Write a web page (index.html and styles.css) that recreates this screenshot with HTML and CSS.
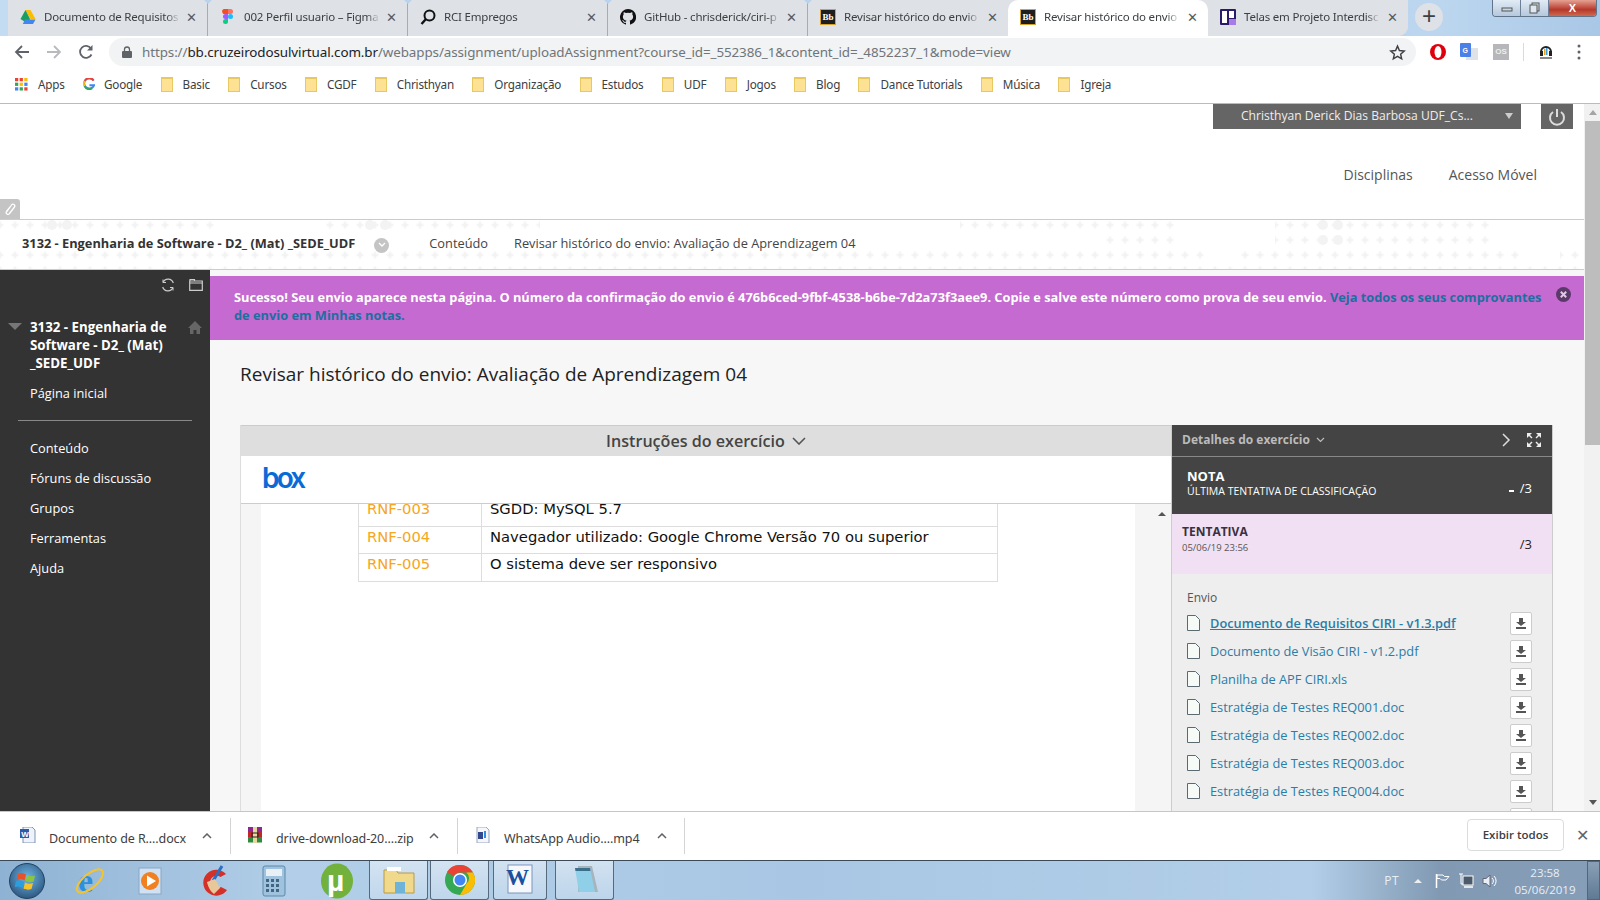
FILE: index.html
```html
<!DOCTYPE html>
<html lang="pt">
<head>
<meta charset="utf-8">
<title>Revisar histórico do envio</title>
<link rel="stylesheet" href="styles.css">
</head>
<body>
<div class="browser">
  <div class="tabstrip">
    <div class="tabs">
      <div class="tab"><svg class="fav" viewBox="0 0 16 16"><path fill="#fbbc04" d="M5.500 1h5l5 9h-5z"/><path fill="#1a9f5f" d="M5.500 1 10 10l-2.500 4.500L0.500 10z"/><path fill="#4285f4" d="M5 10.500h10.500L13 15H2.800z"/></svg><span class="tab-title">Documento de Requisitos</span><span class="tab-x">✕</span></div>
      <div class="tab"><svg class="fav" viewBox="0 0 16 16"><path fill="#f24e1e" d="M4 0h4v5H5.500a2.500 2.500 0 0 1-1.500-5z"/><path fill="#ff7262" d="M8 0h2.500a2.500 2.500 0 0 1 0 5H8z"/><path fill="#a259ff" d="M5.500 5H8v5H5.500a2.500 2.500 0 0 1 0-5z"/><circle fill="#1abcfe" cx="10.500" cy="7.500" r="2.500"/><path fill="#0acf83" d="M5.500 10H8v2.500a2.500 2.500 0 1 1-2.500-2.500z"/></svg><span class="tab-title">002 Perfil usuario – Figma</span><span class="tab-x">✕</span></div>
      <div class="tab"><svg class="fav" viewBox="0 0 16 16"><circle cx="9.500" cy="6.500" r="5" fill="none" stroke="#111" stroke-width="2"/><path d="M6 10 1.500 15" stroke="#111" stroke-width="2.400"/></svg><span class="tab-title">RCI Empregos</span><span class="tab-x">✕</span></div>
      <div class="tab"><svg class="fav" viewBox="0 0 16 16"><path fill="#111" d="M8 0a8 8 0 0 0-2.500 15.600c.4.100.500-.200.500-.400v-1.400c-2.200.500-2.700-1-2.700-1-.4-.900-.900-1.200-.900-1.200-.700-.500.100-.500.100-.500.800.100 1.200.800 1.200.800.700 1.200 1.900.900 2.300.700.100-.500.300-.900.500-1.100-1.800-.200-3.600-.900-3.600-4 0-.900.300-1.600.800-2.100-.100-.200-.400-1 .100-2.100 0 0 .700-.200 2.200.800a7.500 7.500 0 0 1 4 0c1.500-1 2.200-.800 2.200-.800.400 1.100.200 1.900.100 2.100.500.600.800 1.300.800 2.100 0 3.100-1.900 3.800-3.600 4 .300.200.500.700.500 1.500v2.200c0 .200.100.500.600.400A8 8 0 0 0 8 0z"/></svg><span class="tab-title">GitHub - chrisderick/ciri-p</span><span class="tab-x">✕</span></div>
      <div class="tab"><span class="bb">Bb</span><span class="tab-title">Revisar histórico do envio</span><span class="tab-x">✕</span></div>
      <div class="tab tab-active"><span class="bb">Bb</span><span class="tab-title">Revisar histórico do envio</span><span class="tab-x">✕</span></div>
      <div class="tab tab-last"><svg class="fav" viewBox="0 0 16 16"><rect width="16" height="16" rx="1" fill="#2b1a6c"/><rect x="2" y="2" width="5" height="12" fill="#fff"/><rect x="9" y="2" width="5" height="7" fill="#fff"/><rect x="9" y="10" width="7" height="6" fill="#a87be8"/></svg><span class="tab-title">Telas em Projeto Interdisc</span><span class="tab-x">✕</span></div>
    </div>
    <div class="newtab">+</div>
    <div class="winctl">
      <span class="win-btn"><svg width="12" height="8" viewBox="0 0 12 8"><rect x="1" y="4" width="10" height="3" fill="none" stroke="#555"/></svg></span>
      <span class="win-btn"><svg width="12" height="12" viewBox="0 0 12 12"><rect x="3" y="1" width="7" height="8" fill="none" stroke="#555"/><rect x="1" y="3" width="7" height="8" fill="#dfe8f2" stroke="#555"/></svg></span>
      <span class="win-btn win-close">X</span>
    </div>
  </div>

  <div class="toolbar">
    <svg class="tool" viewBox="0 0 16 16"><path d="M15 8H2M8 2 2 8l6 6" fill="none" stroke="#5f6368" stroke-width="1.800"/></svg>
    <svg class="tool" viewBox="0 0 16 16"><path d="M1 8h13M8 2l6 6-6 6" fill="none" stroke="#b8babd" stroke-width="1.800"/></svg>
    <svg class="tool" viewBox="0 0 16 16"><path d="M13.500 10.500A6 6 0 1 1 13 4.500" fill="none" stroke="#5f6368" stroke-width="1.800"/><path d="M14.500 1v5.500H9z" fill="#5f6368"/></svg>
    <div class="omnibox">
      <svg class="lock" viewBox="0 0 10 12"><path d="M2.500 5V3.500a2.500 2.500 0 0 1 5 0V5" fill="none" stroke="#5f6368" stroke-width="1.300"/><rect y="5" width="10" height="7" rx="1" fill="#5f6368"/></svg>
      <span class="url">https://<span class="url-host">bb.cruzeirodosulvirtual.com.br</span>/webapps/assignment/uploadAssignment?course_id=_552386_1&amp;content_id=_4852237_1&amp;mode=view</span>
      <svg class="star" viewBox="0 0 24 24"><path d="M12 3l2.700 6.200 6.800.6-5.100 4.500 1.500 6.600L12 17.400l-5.900 3.500 1.500-6.600L2.500 9.800l6.800-.6z" fill="none" stroke="#3c4043" stroke-width="2"/></svg>
    </div>
    <div class="extensions">
      <svg class="ext" viewBox="0 0 18 18"><circle cx="9" cy="9" r="8" fill="#e0000d"/><ellipse cx="9" cy="9" rx="3.500" ry="6" fill="#fff"/></svg>
      <svg class="ext" viewBox="0 0 18 18"><rect x="6" y="5" width="12" height="12" fill="#dfe3e8"/><rect width="11" height="14" rx="1" fill="#4a80e8"/><text x="2.500" y="10" class="ext-g">G</text></svg>
      <span class="ext-os">OS</span>
      <span class="ext-sep"></span>
      <svg class="ext" viewBox="0 0 18 18"><path d="M4 9a5 5 0 0 1 10 0" fill="none" stroke="#222" stroke-width="2"/><rect x="3" y="8" width="3" height="5" fill="#222"/><rect x="12" y="8" width="3" height="5" fill="#222"/><rect x="7" y="6" width="1.500" height="6" fill="#e8a020"/><rect x="9" y="5" width="1.500" height="7" fill="#3aa0e0"/><rect x="3" y="14" width="12" height="2" fill="#888"/></svg>
      <svg class="ext ext-dots" viewBox="0 0 4 16"><circle cx="2" cy="2" r="1.500" fill="#5f6368"/><circle cx="2" cy="8" r="1.500" fill="#5f6368"/><circle cx="2" cy="14" r="1.500" fill="#5f6368"/></svg>
    </div>
  </div>

  <div class="bookmarks">
    <span class="bm bm-apps"><svg class="bm-ico" viewBox="0 0 14 14"><g fill="#ea4335"><rect width="3.500" height="3.500"/><rect x="5" width="3.500" height="3.500"/></g><rect x="10" width="3.500" height="3.500" fill="#fbbc04"/><rect y="5" width="3.500" height="3.500" fill="#34a853"/><rect x="5" y="5" width="3.500" height="3.500" fill="#fbbc04"/><rect x="10" y="5" width="3.500" height="3.500" fill="#4285f4"/><rect y="10" width="3.500" height="3.500" fill="#4285f4"/><rect x="5" y="10" width="3.500" height="3.500" fill="#34a853"/><rect x="10" y="10" width="3.500" height="3.500" fill="#ea4335"/></svg>Apps</span>
    <span class="bm"><svg class="bm-ico bm-g" viewBox="0 0 14 14"><path d="M12.500 3A6 6 0 1 0 13 8.500H7.500" fill="none" stroke="#4285f4" stroke-width="2.200"/><path d="M12.300 3A6 6 0 0 0 2 3.500" fill="none" stroke="#ea4335" stroke-width="2.200"/><path d="M1.800 3.500a6 6 0 0 0 0 6" fill="none" stroke="#fbbc04" stroke-width="2.200"/><path d="M1.800 9.500a6 6 0 0 0 9 2.500" fill="none" stroke="#34a853" stroke-width="2.200"/></svg>Google</span>
    <span class="bm"><i class="folder"></i>Basic</span>
    <span class="bm"><i class="folder"></i>Cursos</span>
    <span class="bm"><i class="folder"></i>CGDF</span>
    <span class="bm"><i class="folder"></i>Christhyan</span>
    <span class="bm"><i class="folder"></i>Organização</span>
    <span class="bm"><i class="folder"></i>Estudos</span>
    <span class="bm"><i class="folder"></i>UDF</span>
    <span class="bm"><i class="folder"></i>Jogos</span>
    <span class="bm"><i class="folder"></i>Blog</span>
    <span class="bm"><i class="folder"></i>Dance Tutorials</span>
    <span class="bm"><i class="folder"></i>Música</span>
    <span class="bm"><i class="folder"></i>Igreja</span>
  </div>

  <div class="page">
    <div class="page-main">
      <header class="site-head">
        <div class="user-row">
          <div class="user-btn"><span>Christhyan Derick Dias Barbosa UDF_Cs...</span><i class="user-caret"></i></div>
          <div class="power"><svg width="18" height="18" viewBox="0 0 18 18"><path d="M5 4a7 7 0 1 0 8 0" fill="none" stroke="#ddd" stroke-width="2"/><path d="M9 1v8" stroke="#ddd" stroke-width="2"/></svg></div>
        </div>
        <nav class="site-nav"><a>Disciplinas</a><a>Acesso Móvel</a></nav>
        <div class="clip-tab"><svg width="12" height="14" viewBox="0 0 12 14"><path d="M3 9.500 7.500 3a1.800 1.800 0 0 1 3 2L5.500 11.500a1.800 1.800 0 0 1-3-2L6 5" fill="none" stroke="#fff" stroke-width="1.300"/></svg></div>
      </header>

      <div class="crumbs">
        <svg class="crumbs-bg" width="1584" height="49">
          <defs>
            <pattern id="plus" width="15" height="15" patternUnits="userSpaceOnUse" patternTransform="translate(7.500 -2.500)"><path d="M4 7.500h7M7.500 4v7" stroke="#f1f1f1" stroke-width="2"/></pattern>
          </defs>
          <rect y="0" width="220" height="13" fill="url(#plus)"/><rect x="320" y="0" width="220" height="13" fill="url(#plus)"/><rect x="960" y="0" width="215" height="13" fill="url(#plus)"/><rect x="1275" y="0" width="215" height="13" fill="url(#plus)"/>
          <rect x="1105" y="13" width="70" height="15" fill="url(#plus)"/><rect x="1275" y="13" width="215" height="15" fill="url(#plus)"/>
          <rect y="28" width="1205" height="15" fill="url(#plus)"/><rect x="1240" y="28" width="285" height="15" fill="url(#plus)"/><rect x="1560" y="28" width="24" height="15" fill="url(#plus)"/>
          <rect y="43" width="1584" height="6" fill="url(#plus)"/>
          <g fill="#f3f3f3"><circle cx="52" cy="5" r="5"/><circle cx="67" cy="5" r="5"/><circle cx="370" cy="5" r="5"/><circle cx="385" cy="5" r="5"/><circle cx="1323" cy="5" r="5"/><circle cx="1338" cy="5" r="5"/><circle cx="1323" cy="20" r="5"/><circle cx="1338" cy="20" r="5"/></g>
        </svg>
        <strong class="crumb-course">3132 - Engenharia de Software - D2_ (Mat) _SEDE_UDF</strong>
        <i class="crumb-toggle"><svg width="8" height="6" viewBox="0 0 8 6"><path d="M1 1l3 3 3-3" fill="none" stroke="#fff" stroke-width="1.300"/></svg></i>
        <span class="crumb">Conteúdo</span>
        <span class="crumb">Revisar histórico do envio: Avaliação de Aprendizagem 04</span>
      </div>

      <div class="body-row">
        <aside class="sidebar">
          <div class="side-tools">
            <svg width="14" height="14" viewBox="0 0 14 14"><path d="M12.300 5A5.500 5.500 0 0 0 2 4.500M1.700 9a5.500 5.500 0 0 0 10.300.500" fill="none" stroke="#ccc" stroke-width="1.200"/><path d="M2 1.500v3h3M12 12.500v-3H9" fill="none" stroke="#ccc"/></svg>
            <svg width="14" height="13" viewBox="0 0 14 13"><path d="M1 3V1.500h4.500V3M.7 3h12.600v9.300H.7zM.7 5h12.600" fill="none" stroke="#ccc" stroke-width="1.200"/></svg>
          </div>
          <div class="side-course">
            <i class="side-tri"></i>
            <strong class="side-title">3132 - Engenharia de Software - D2_ (Mat) _SEDE_UDF</strong>
            <svg class="side-home" width="14" height="13" viewBox="0 0 14 13"><path d="M7 0 0 7h2v6h3.500V9h3v4H12V7h2z" fill="#666"/></svg>
          </div>
          <a class="side-link side-home-link">Página inicial</a>
          <hr class="side-rule">
          <a class="side-link">Conteúdo</a>
          <a class="side-link">Fóruns de discussão</a>
          <a class="side-link">Grupos</a>
          <a class="side-link">Ferramentas</a>
          <a class="side-link">Ajuda</a>
        </aside>

        <main class="content">
          <div class="banner">
            <p class="banner-text">Sucesso! Seu envio aparece nesta página. O número da confirmação do envio é 476b6ced-9fbf-4538-b6be-7d2a73f3aee9. Copie e salve este número como prova de seu envio. <a class="banner-link">Veja todos os seus comprovantes de envio em Minhas notas.</a></p>
            <svg class="banner-x" width="15" height="15" viewBox="0 0 15 15"><circle cx="7.500" cy="7.500" r="7.500" fill="#5b3a6b"/><path d="M4.800 4.800l5.400 5.400M10.200 4.800l-5.400 5.400" stroke="#e0c8e6" stroke-width="2"/></svg>
          </div>
          <h1 class="page-title">Revisar histórico do envio: Avaliação de Aprendizagem 04</h1>
          <div class="panel">
            <section class="instr">
              <div class="instr-head">Instruções do exercício <svg width="14" height="8" viewBox="0 0 14 8"><path d="M1 1l6 6 6-6" fill="none" stroke="#555" stroke-width="1.600"/></svg></div>
              <div class="box-bar"><span class="box-logo">box</span></div>
              <div class="viewer">
                <div class="doc">
                  <table class="req">
                    <tr><td class="req-id">RNF-003</td><td>SGDD: MySQL 5.7</td></tr>
                    <tr><td class="req-id">RNF-004</td><td>Navegador utilizado: Google Chrome Versão 70 ou superior</td></tr>
                    <tr><td class="req-id">RNF-005</td><td>O sistema deve ser responsivo</td></tr>
                  </table>
                </div>
                <div class="viewer-scroll"><i class="arr-up"></i></div>
              </div>
            </section>
            <aside class="details">
              <div class="det-head"><span class="det-title">Detalhes do exercício</span><svg width="9" height="6" viewBox="0 0 9 6"><path d="M1 1l3.500 3.500L8 1" fill="none" stroke="#bbb" stroke-width="1.200"/></svg>
                <svg class="det-next" width="9" height="14" viewBox="0 0 9 14"><path d="M1 1l6 6-6 6" fill="none" stroke="#ddd" stroke-width="1.500"/></svg>
                <svg class="det-exp" width="16" height="16" viewBox="0 0 16 16"><path d="M1 6V1h5L4 3l2.500 2.500-1 1L3 4zM15 6V1h-5l2 2-2.500 2.500 1 1L13 4zM1 10v5h5l-2-2 2.500-2.500-1-1L3 12zM15 10v5h-5l2-2-2.500-2.500 1-1L13 12z" fill="#eee"/></svg>
              </div>
              <div class="det-grade">
                <div><strong class="grade-label">NOTA</strong><span class="grade-sub">ÚLTIMA TENTATIVA DE CLASSIFICAÇÃO</span></div>
                <span class="score"><i class="dash"></i>/3</span>
              </div>
              <div class="det-attempt">
                <div><strong class="att-label">TENTATIVA</strong><span class="att-date">05/06/19 23:56</span></div>
                <span class="score score-dark">/3</span>
              </div>
              <div class="det-files">
                <div class="env">Envio</div>
                <div class="file"><svg class="file-ico" viewBox="0 0 13 16"><path d="M.5.500h8l4 4v11H.5z" fill="#f6fbf8" stroke="#5a6a70"/></svg><a class="file-name file-cur">Documento de Requisitos CIRI - v1.3.pdf</a><button class="dl"><i class="dl-arrow"></i></button></div>
                <div class="file"><svg class="file-ico" viewBox="0 0 13 16"><path d="M.5.500h8l4 4v11H.5z" fill="#f6fbf8" stroke="#5a6a70"/></svg><a class="file-name">Documento de Visão CIRI - v1.2.pdf</a><button class="dl"><i class="dl-arrow"></i></button></div>
                <div class="file"><svg class="file-ico" viewBox="0 0 13 16"><path d="M.5.500h8l4 4v11H.5z" fill="#f6fbf8" stroke="#5a6a70"/></svg><a class="file-name">Planilha de APF CIRI.xls</a><button class="dl"><i class="dl-arrow"></i></button></div>
                <div class="file"><svg class="file-ico" viewBox="0 0 13 16"><path d="M.5.500h8l4 4v11H.5z" fill="#f6fbf8" stroke="#5a6a70"/></svg><a class="file-name">Estratégia de Testes REQ001.doc</a><button class="dl"><i class="dl-arrow"></i></button></div>
                <div class="file"><svg class="file-ico" viewBox="0 0 13 16"><path d="M.5.500h8l4 4v11H.5z" fill="#f6fbf8" stroke="#5a6a70"/></svg><a class="file-name">Estratégia de Testes REQ002.doc</a><button class="dl"><i class="dl-arrow"></i></button></div>
                <div class="file"><svg class="file-ico" viewBox="0 0 13 16"><path d="M.5.500h8l4 4v11H.5z" fill="#f6fbf8" stroke="#5a6a70"/></svg><a class="file-name">Estratégia de Testes REQ003.doc</a><button class="dl"><i class="dl-arrow"></i></button></div>
                <div class="file"><svg class="file-ico" viewBox="0 0 13 16"><path d="M.5.500h8l4 4v11H.5z" fill="#f6fbf8" stroke="#5a6a70"/></svg><a class="file-name">Estratégia de Testes REQ004.doc</a><button class="dl"><i class="dl-arrow"></i></button></div>
                <div class="file"><button class="dl"></button></div>
              </div>
            </aside>
          </div>
        </main>
      </div>
    </div>
    <div class="scrollbar"><i class="sb-up"></i><i class="sb-thumb"></i><i class="sb-down"></i></div>
  </div>

  <div class="downloads">
    <div class="dl-item dl-w1"><svg class="dl-ico" viewBox="0 0 16 16"><path d="M3 0h9l3 3v13H3z" fill="#eef2fa" stroke="#7f93b5"/><rect y="2" width="9" height="9" fill="#2a5caa"/><text x="1.200" y="9.500" class="ico-w">W</text></svg><span class="dl-name">Documento de R....docx</span><svg class="dl-chev" width="10" height="6" viewBox="0 0 10 6"><path d="M1 5l4-4 4 4" fill="none" stroke="#5f6368" stroke-width="1.500"/></svg></div>
    <div class="dl-item dl-w2"><svg class="dl-ico" viewBox="0 0 16 16"><rect x="1" width="14" height="5" fill="#8b2a8c"/><rect x="1" y="5" width="14" height="5" fill="#c0262b"/><rect x="1" y="10" width="14" height="5.500" fill="#2f8c3d"/><rect x="6" y="0" width="4" height="16" fill="#e8d8a0"/><rect x="5" y="6" width="6" height="4" fill="none" stroke="#222"/></svg><span class="dl-name">drive-download-20....zip</span><svg class="dl-chev" width="10" height="6" viewBox="0 0 10 6"><path d="M1 5l4-4 4 4" fill="none" stroke="#5f6368" stroke-width="1.500"/></svg></div>
    <div class="dl-item dl-w3"><svg class="dl-ico" viewBox="0 0 16 16"><path d="M2 0h9l3 3v13H2z" fill="#f4f6fa" stroke="#9aa7bd"/><rect x="3" y="5" width="5" height="7" fill="#33488c"/><path d="M10 4v7" stroke="#2a8fe0" stroke-width="2"/></svg><span class="dl-name">WhatsApp Audio....mp4</span><svg class="dl-chev" width="10" height="6" viewBox="0 0 10 6"><path d="M1 5l4-4 4 4" fill="none" stroke="#5f6368" stroke-width="1.500"/></svg></div>
    <div class="dl-right"><button class="show-all">Exibir todos</button><span class="dl-close">✕</span></div>
  </div>

  <footer class="taskbar">
    <div class="orb"><svg width="24" height="24" viewBox="0 0 24 24"><path d="M3 5c3-1.500 5-1 8 .500l-1.500 6c-3-1.500-5-2-8-.500z" fill="#e8522b"/><path d="M12 6c3 1.500 5 1.500 8 .500l-1.500 6c-3 1-5 1-8-.500z" fill="#8cc63f"/><path d="M1 12.500c3-1.500 5-1 8 .500l-1.500 6c-3-1.500-5-2-8-.500z" fill="#2a9fe0"/><path d="M10 13.500c3 1.500 5 1.500 8 .500l-1.500 6c-3 1-5 1-8-.500z" fill="#f5c32c"/></svg></div>
    <span class="tb tb-ie"><svg width="34" height="34" viewBox="0 0 34 34"><text x="5" y="28" class="ie-e">e</text><ellipse cx="17" cy="17" rx="16" ry="7" transform="rotate(-40 17 17)" fill="none" stroke="#f4c430" stroke-width="2"/></svg></span>
    <span class="tb tb-wmp"><svg width="26" height="30" viewBox="0 0 26 30"><rect x="1" y="2" width="22" height="26" fill="#cfe1f2" stroke="#8aa7c4"/><circle cx="12" cy="15" r="9" fill="#f08020"/><path d="M9 9.500l9 5.500-9 5.500z" fill="#fff"/></svg></span>
    <span class="tb tb-cc"><svg width="34" height="34" viewBox="0 0 34 34"><path d="M29 10A13 13 0 1 0 30 26l-6-3a6.500 6.500 0 1 1-.500-10z" fill="#d3302a"/><path d="M25 2 16 17" stroke="#2a6fc0" stroke-width="3"/><path d="M10 18l8-3 5 9-6 6c-3-2-6-7-7-12z" fill="#e8c89a"/></svg></span>
    <span class="tb tb-calc"><svg width="24" height="32" viewBox="0 0 24 32"><rect x="1" y="1" width="22" height="30" rx="2" fill="#9fc3de" stroke="#5c89ab"/><rect x="4" y="4" width="16" height="7" fill="#e8f0f6"/><g fill="#44657f"><rect x="4" y="14" width="3" height="3"/><rect x="9" y="14" width="3" height="3"/><rect x="14" y="14" width="3" height="3"/><rect x="4" y="19" width="3" height="3"/><rect x="9" y="19" width="3" height="3"/><rect x="14" y="19" width="3" height="3"/><rect x="4" y="24" width="3" height="3"/><rect x="9" y="24" width="3" height="3"/><rect x="14" y="24" width="3" height="3"/></g></svg></span>
    <span class="tb tb-ut"><svg width="32" height="36" viewBox="0 0 32 36"><ellipse cx="16" cy="18" rx="16" ry="17.500" fill="#72b13b"/><text x="6" y="28" class="ut-mu">µ</text></svg></span>
    <span class="tb-btn tb-b1"><svg width="32" height="30" viewBox="0 0 32 30"><path d="M1 5h12l2 3h16v20H1z" fill="#f0d98a" stroke="#b59a4a"/><rect x="4" y="2" width="14" height="4" fill="#fff"/><rect x="12" y="17" width="10" height="11" fill="#6fb3d8"/></svg></span>
    <span class="tb-btn tb-b2"><svg width="30" height="30" viewBox="0 0 30 30"><circle cx="15" cy="15" r="15" fill="#34a853"/><path d="M15 0a15 15 0 0 1 13 7.500H15a7.500 7.500 0 0 0-6.500 3.700L2 7A15 15 0 0 1 15 0z" fill="#ea4335"/><path d="M28 7.500A15 15 0 0 1 15 30l6.500-11.200a7.500 7.500 0 0 0 0-11.300z" fill="#fbbc04"/><circle cx="15" cy="15" r="7" fill="#fff"/><circle cx="15" cy="15" r="5.500" fill="#4285f4"/></svg></span>
    <span class="tb-btn tb-b3"><svg width="30" height="32" viewBox="0 0 30 32"><rect x="3" y="1" width="24" height="28" fill="#f6f8fc" stroke="#7d95bd"/><text x="1" y="21" class="word-w">W</text></svg></span>
    <span class="tb-btn tb-b4"><svg width="30" height="32" viewBox="0 0 30 32"><path d="M8 2h14l6 26H8z" fill="#a8b4bc"/><path d="M5 4h15l5 24H9z" fill="#8fd0e8"/><path d="M5 4h15l.500 3H5.500z" fill="#3c6f8c"/></svg></span>
    <div class="tray">
      <span class="tray-lang">PT</span>
      <i class="tray-up"></i>
      <svg class="tray-flag" width="16" height="16" viewBox="0 0 16 16"><path d="M2.500 1v14" stroke="#fff" stroke-width="1.500"/><path d="M3 2h6l1.500 1.500H15L12 7H7.500L6 5.500H3z" fill="none" stroke="#fff"/></svg>
      <svg width="16" height="16" viewBox="0 0 16 16"><rect x="5" y="3" width="10" height="9" fill="#4a5a6a" stroke="#fff"/><path d="M3 1v10h2M1 1h4" stroke="#fff" fill="none"/><path d="M6 14h9" stroke="#fff" stroke-width="1.500"/></svg>
      <svg width="16" height="16" viewBox="0 0 16 16"><path d="M1 5.500h3L8 2v12l-4-3.500H1z" fill="#e8eef4" stroke="#667"/><path d="M10 5a4 4 0 0 1 0 6M12 3a7 7 0 0 1 0 10" fill="none" stroke="#fff"/></svg>
      <div class="clock"><span>23:58</span><span>05/06/2019</span></div>
    </div>
    <i class="show-desktop"></i>
  </footer>
</div>
</body>
</html>
```

FILE: styles.css
```css
* { box-sizing: border-box; }
html, body { margin: 0; height: 100%; overflow: hidden; }
body { font-family: "Open Sans", "Liberation Sans", sans-serif; color: #333; background: #fff; }
.browser { display: flex; flex-direction: column; height: 900px; width: 1600px; }
a { text-decoration: none; }
i { display: block; font-style: normal; }

/* tab strip */
.tabstrip { height: 36px; display: flex; align-items: flex-start; padding-left: 8px; background: linear-gradient(90deg, #c4dcf2, #b4d0ec 60%, #bcd6ef 90%, #a9c7e6); flex: none; }
.tabs { display: flex; height: 36px; background: #dee1e6; border-bottom-right-radius: 10px; }
.tab { width: 200px; height: 36px; display: flex; align-items: center; padding: 0 9px 3px 12px; position: relative; font-family: "Noto Sans", sans-serif; font-size: 11.500px; color: #3c4043; border-right: 1px solid #a8acb1; background: #dee1e6; }
.tab:nth-child(-n+4)::after { content: ""; position: absolute; right: -5px; top: 0; border: 4px solid transparent; border-top: 4px solid #b9d3ee; border-bottom: 0; z-index: 1; }
.tab:nth-child(5), .tab-last { border-right: 0; }
.tab-active { background: #fff; border-radius: 10px 10px 0 0; border-right: 0; }
.tab-last { border-bottom-right-radius: 10px; }
.fav { width: 16px; height: 16px; flex: none; }
.bb { width: 16px; height: 16px; flex: none; background: #1f1f1f; border: 1px solid #d9a22a; color: #fff; font: bold 9px/14px "Liberation Serif", serif; text-align: center; }
.tab-title { margin-left: 8px; width: 136px; white-space: nowrap; overflow: hidden; letter-spacing: -0.2px; -webkit-mask-image: linear-gradient(90deg, #000 90%, transparent); mask-image: linear-gradient(90deg, #000 90%, transparent); }
.tab-x { margin-left: auto; font-size: 13px; color: #55595e; width: 14px; text-align: center; }
.newtab { width: 28px; height: 28px; border-radius: 50%; background: #dee1e6; margin: 3px 0 0 7px; text-align: center; font: 24px/26px "Liberation Sans", sans-serif; color: #3c4043; }
.winctl { display: flex; margin: 0 3px 0 auto; height: 17px; border: 1px solid #5f7389; border-top: 0; border-radius: 0 0 4px 4px; overflow: hidden; }
.win-btn { width: 28px; height: 16px; display: flex; align-items: center; justify-content: center; background: linear-gradient(#e2ebf5, #b5c8dc); border-right: 1px solid #6d8097; }
.win-close { width: 47px; border-right: 0; background: linear-gradient(#e6a193, #b6392a 60%, #cf6a50); color: #fff; font: bold 11px "Liberation Sans", sans-serif; }

/* toolbar */
.toolbar { height: 35px; display: flex; align-items: center; background: #fff; padding: 0 14px 3px 14px; flex: none; }
.tool { width: 16px; height: 16px; margin-right: 16px; flex: none; }
.omnibox { margin-left: -1px; width: 1307px; height: 28px; border-radius: 14px; background: #f1f3f4; display: flex; align-items: center; padding: 0 10px 0 13px; }
.lock { width: 10px; height: 12px; flex: none; }
.url { margin-left: 10px; font-family: "Noto Sans", sans-serif; font-size: 13.420px; color: #70757a; white-space: nowrap; letter-spacing: -0.1px; }
.url-host { color: #202124; }
.star { width: 17px; height: 17px; margin-left: auto; }
.extensions { display: flex; align-items: center; margin-left: 13px; }
.ext { width: 18px; height: 18px; flex: none; margin-right: 13px; }
.ext-g { font: bold 7px "Liberation Sans", sans-serif; fill: #fff; }
.ext-os { width: 16px; height: 16px; background: #b5b7ba; color: #eee; font: bold 8px/16px "Liberation Sans", sans-serif; text-align: center; margin: 0 0 0 2px; }
.ext-sep { width: 1px; height: 18px; background: #d8dadd; margin: 0 13px 0 14px; }
.ext-dots { width: 4px; height: 16px; margin: 0 0 0 9px; }

/* bookmarks */
.bookmarks { height: 33px; display: flex; align-items: center; gap: 18.300px; padding: 0 0 6px 15px; background: #fff; border-bottom: 1px solid #bbb; flex: none; font-family: "Noto Sans", sans-serif; font-size: 11.700px; color: #3c4043; letter-spacing: -0.2px; }
.bm { display: flex; align-items: center; white-space: nowrap; }
.bm-ico { width: 13px; height: 13px; margin-right: 10px; flex: none; }
.bm-g { width: 12px; height: 12px; margin-right: 9px; }
.folder { width: 12px; height: 15px; margin-right: 10px; background: #fde293; border: 1px solid #e8c860; border-top-width: 2px; flex: none; }

/* page */
.page { flex: 1; min-height: 0; display: flex; background: #fff; }
.page-main { flex: 1; min-width: 0; display: flex; flex-direction: column; }
.scrollbar { width: 16px; background: #f1f1f1; flex: none; padding: 0 0 0 1px; display: flex; flex-direction: column; }
.sb-up { width: 0; height: 0; margin: 6px auto 6px; border: 4px solid transparent; border-top: 0; border-bottom: 5px solid #a5a5a5; }
.sb-thumb { height: 324px; background: #bdbdbd; }
.sb-down { width: 0; margin: auto auto 6px; border: 4px solid transparent; border-bottom: 0; border-top: 5px solid #555; }

.site-head { height: 115px; position: relative; flex: none; }
.user-row { display: flex; justify-content: flex-end; gap: 20px; padding-right: 11px; }
.user-btn { width: 308px; height: 25px; background: #656565; color: #eee; font-size: 12.100px; display: flex; align-items: center; padding: 0 8px 2px 28px; white-space: nowrap; }
.user-caret { margin-left: auto; border: 4.500px solid transparent; border-top: 6px solid #ccc; border-bottom: 0; }
.power { width: 32px; height: 25px; background: #656565; display: flex; align-items: center; justify-content: center; }
.site-nav { display: flex; justify-content: flex-end; gap: 36px; margin-top: 36px; padding-right: 47px; font-size: 14px; line-height: 20px; color: #555; }
.clip-tab { position: absolute; left: 0; bottom: 0; width: 20px; height: 20px; background: #c4c4c4; border-radius: 0 3px 0 0; display: flex; align-items: center; justify-content: center; }

.crumbs { height: 51px; position: relative; display: flex; align-items: center; flex: none; border-top: 1px solid #ccc; border-bottom: 1px solid #ccc; padding: 0 0 4px 22px; font-size: 12.800px; color: #444; white-space: nowrap; }
.crumbs-bg { position: absolute; left: 0; top: 0; }
.crumbs > :not(.crumbs-bg) { position: relative; }
.crumb-course { font-weight: 700; color: #333; }
.crumb-toggle { width: 15px; height: 15px; margin: 5px 40px 0 19px; border-radius: 50%; background: #c4c4c4; display: flex; align-items: center; justify-content: center; }
.crumb { margin-right: 26px; }

.body-row { flex: 1; min-height: 0; display: flex; }
.sidebar { width: 210px; flex: none; background: #333; color: #fff; font-size: 12.800px; }
.side-tools { display: flex; justify-content: flex-end; gap: 14px; padding: 8px 7px 0 0; height: 48px; }
.side-course { display: flex; align-items: flex-start; padding: 0 8px 0 8px; }
.side-tri { flex: none; margin: 5px 8px 0 0; border: 7px solid transparent; border-top: 7px solid #777; border-bottom: 0; width: 0; }
.side-title { display: block; width: 145px; line-height: 18px; font-weight: 700; flex: none; font-size: 13.300px; }
.side-home { margin: 3px 0 0 13px; }
.side-link { display: block; padding-left: 30px; line-height: 30px; }
.side-home-link { margin-top: 6px; }
.side-rule { margin: 12px 18px 12px; border: 0; border-top: 1px solid #888; }

.content { flex: 1; min-width: 0; background: #f7f7f7; padding-top: 6px; overflow: hidden; }
.banner { height: 64px; background: #c46ad0; padding: 12px 10px 0 24px; position: relative; }
.banner-text { margin: 0; width: 1320px; color: #fff; font-size: 12.800px; font-weight: 700; line-height: 18px; }
.banner-link { color: #1d6f9f; }
.banner-x { position: absolute; right: 13px; top: 11px; }
.page-title { margin: 21px 0 0 30px; font-size: 19px; font-weight: 400; line-height: 26px; color: #222; }
.panel { display: flex; margin: 38px 31px 0 30px; height: 400px; }
.instr { flex: 1; min-width: 0; border-left: 1px solid #ddd; display: flex; flex-direction: column; }
.instr-head { height: 31px; flex: none; background: #dedede; border-top: 1px solid #ccc; display: flex; align-items: center; justify-content: center; gap: 7px; font-size: 16.100px; font-weight: 600; color: #444; }
.box-bar { height: 48px; flex: none; background: #fff; border-bottom: 1px solid #ccc; padding: 0 0 3px 21px; display: flex; align-items: center; }
.box-logo { font: 600 28px/40px "Inter", "Liberation Sans", sans-serif; letter-spacing: -2.800px; color: #0b6bd6; }
.viewer { flex: 1; min-height: 0; display: flex; background: #f5f5f5; overflow: hidden; }
.doc { margin-left: 20px; width: 874px; background: #fff; padding-left: 97px; flex: none; }
.req { width: 640px; margin-top: -6px; border-collapse: collapse; font-family: "DejaVu Sans", sans-serif; font-size: 14.750px; color: #111; }
.req td { height: 27.500px; padding: 0 8px; border: 1px solid #ddd; line-height: 20px; vertical-align: top; }
.req-id { width: 123px; color: #f5a623; }
.viewer-scroll { flex: 1; position: relative; }
.arr-up { position: absolute; top: 8px; left: 23px; border: 4px solid transparent; border-top: 0; border-bottom: 4px solid #555; }
.details { width: 382px; flex: none; border: 1px solid #ccc; border-top: 0; border-bottom: 0; background: #eee; display: flex; flex-direction: column; }
.det-head { height: 32px; flex: none; background: #444; border-bottom: 1px solid #888; display: flex; align-items: center; gap: 6px; padding: 0 10px 2px; color: #bbb; font-size: 12px; font-weight: 700; }
.det-next { margin-left: auto; }
.det-exp { margin-left: 9px; }
.det-grade { height: 57px; flex: none; background: #444; color: #fff; display: flex; justify-content: space-between; padding: 11px 20px 0 15px; }
.grade-label { display: block; font-size: 13px; line-height: 17px; }
.grade-sub { display: block; font-size: 10.500px; line-height: 13px; }
.score { font-size: 13px; display: flex; align-items: center; height: 40px; gap: 6px; }
.dash { width: 5px; height: 2px; background: #fff; margin-top: 6px; }
.det-attempt { height: 60px; flex: none; background: #f1e0f4; display: flex; justify-content: space-between; padding: 9px 20px 0 10px; }
.att-label { display: block; font-size: 12px; line-height: 17px; color: #3a3040; }
.att-date { display: block; font-size: 9.500px; line-height: 15px; color: #555; }
.score-dark { color: #222; height: 42px; }
.det-files { padding: 14px 19px 0 15px; }
.env { font-size: 12px; line-height: 20px; color: #555; margin-bottom: 1px; }
.file { display: flex; align-items: center; height: 28px; }
.file-ico { width: 13px; height: 16px; flex: none; }
.file-name { margin-left: 10px; font-size: 12.800px; color: #2b7ca6; white-space: nowrap; }
.file-cur { font-weight: 600; text-decoration: underline; }
.dl { margin-left: auto; margin-right: 1px; width: 22px; height: 23px; background: #fff; border: 1px solid #ccc; border-radius: 2px; padding: 0; display: flex; align-items: center; justify-content: center; }
.dl-arrow { width: 10px; height: 11px; border-bottom: 2px solid #555; position: relative; }
.dl-arrow::before { content: ""; position: absolute; left: 3px; top: 0; width: 4px; height: 4px; background: #555; }
.dl-arrow::after { content: ""; position: absolute; left: 0; top: 4px; border: 5px solid transparent; border-top: 4px solid #555; border-bottom: 0; }

/* downloads */
.downloads { height: 49px; flex: none; background: #fff; border-top: 1px solid #c6c6c6; display: flex; align-items: center; font-size: 12px; color: #3c4043; font-family: "Noto Sans", sans-serif; letter-spacing: -0.1px; }
.dl-item { height: 36px; display: flex; align-items: center; border-right: 1px solid #d4d4d4; }
.dl-w1 { width: 231px; padding-left: 20px; }
.dl-w2 { width: 227px; padding-left: 16px; }
.dl-w3 { width: 227px; padding-left: 17px; }
.dl-ico { width: 16px; height: 16px; flex: none; margin: -3px 13px 0 0; }
.ico-w { font: bold 8px "Liberation Sans", sans-serif; fill: #fff; }
.dl-name { width: 137px; white-space: nowrap; font-size: 12.500px; margin-top: 4px; }
.dl-chev { margin-left: 16px; flex: none; }
.dl-right { margin: 0 0 3px auto; display: flex; align-items: center; }
.show-all { width: 97px; height: 32px; border: 1px solid #dadce0; border-radius: 4px; background: #fff; font: 600 11.500px "Open Sans", sans-serif; color: #3c4043; }
.dl-close { width: 36px; text-align: center; font-size: 16px; color: #5f6368; }

/* taskbar */
.taskbar { height: 40px; flex: none; display: flex; align-items: center; background: linear-gradient(90deg, #8eb2d3, #b2cee8 18%, #a9c7e4 50%, #b2cee8 82%, #8199b3 90%, #869eb8); border-top: 1px solid #3c4a58; position: relative; color: #fff; }
.orb { width: 36px; height: 36px; margin-left: 9px; border-radius: 50%; background: radial-gradient(circle at 50% 40%, #6fb6e6, #1c3f66); border: 1px solid #20405f; display: flex; align-items: center; justify-content: center; flex: none; }
.tb { display: flex; justify-content: center; flex: none; }
.tb-ie { width: 50px; margin-left: 20px; }
.tb-wmp { width: 40px; margin-left: 16px; }
.tb-cc { width: 40px; margin-left: 23px; }
.tb-calc { width: 30px; margin-left: 25px; }
.tb-ut { width: 40px; margin-left: 28px; }
.tb-btn { height: 39px; display: flex; align-items: center; justify-content: center; flex: none; border: 1px solid #56697d; border-top: 0; border-radius: 0 0 3px 3px; background: linear-gradient(rgba(255,255,255,.45), rgba(255,255,255,.2)); }
.tb-b1 { width: 59px; margin-left: 12px; }
.tb-b2 { width: 59px; margin-left: 2px; }
.tb-b3 { width: 54px; margin-left: 4px; }
.tb-b4 { width: 59px; margin-left: 8px; }
.ie-e { font: 700 34px "Liberation Serif", serif; fill: #2c8fe0; }
.ut-mu { font: 700 30px "Liberation Sans", sans-serif; fill: #fff; }
.word-w { font: 700 23px "Liberation Serif", serif; fill: #1c4fa0; }
.tray { margin-left: auto; margin-right: 6px; display: flex; align-items: center; gap: 8px; font-size: 12px; color: #e9eff5; }
.tray-lang { margin-right: 7px; letter-spacing: .5px; }
.tray-up { width: 0; border: 4px solid transparent; border-top: 0; border-bottom: 4px solid #eee; }
.tray-flag { margin-left: 4px; }
.clock { display: flex; flex-direction: column; align-items: center; width: 72px; margin-left: 3px; line-height: 17px; font-size: 11.500px; }
.show-desktop { width: 13px; height: 39px; flex: none; background: linear-gradient(#8aa0b6, #5f7a95); border: 1px solid #52677e; }
```
